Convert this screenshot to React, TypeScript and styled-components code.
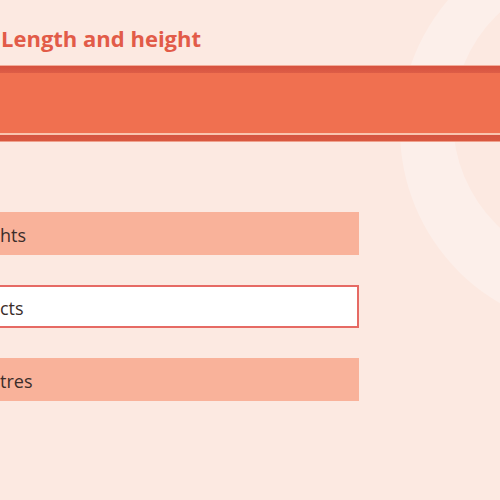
import styled, { createGlobalStyle } from 'styled-components';

const GlobalStyle = createGlobalStyle`
  html, body {
    margin: 0;
    padding: 0;
    background: #fce9e1;
    overflow: hidden;
  }
`;

interface OptionProps {
  $selected?: boolean;
}

const options = [
  { label: 'hts', selected: false },
  { label: 'cts', selected: true },
  { label: 'tres', selected: false },
];

function App() {
  return (
    <>
      <GlobalStyle />
      <Page>
        {/* background decoration, sits behind everything */}
        <Ring>
          <RingHole />
        </Ring>
        <Heading>Length and height</Heading>
        <Banner />
        <Options>
          {options.map((o) => (
            <Option key={o.label} $selected={o.selected}>
              {o.label}
            </Option>
          ))}
        </Options>
      </Page>
    </>
  );
}

export default App;

const Page = styled.div`
  position: relative;
  width: 500px;
  height: 500px;
  overflow: hidden;
  background: #fce9e1;
  font-family: 'Open Sans', 'Noto Sans', sans-serif;
`;

const Ring = styled.div`
  position: absolute;
  left: 400px;
  top: -70px;
  width: 400px;
  height: 400px;
  border-radius: 50%;
  background: #fcefea;
`;

const RingHole = styled.div`
  position: absolute;
  left: 53px;
  top: 43px;
  width: 294px;
  height: 294px;
  border-radius: 50%;
  background: #fce9e1;
`;

const Heading = styled.h1`
  position: relative;
  margin: 0;
  padding: 24px 0 0 1px;
  font-size: 22px;
  line-height: 28px;
  font-weight: 700;
  color: #e25b48;
`;

const Banner = styled.div`
  position: relative;
  margin-top: 13px;
  height: 77px;
  background: linear-gradient(
    to bottom,
    #f3ab98 0,
    #f3ab98 1px,
    #d6523f 1px,
    #dd5d47 8px,
    #f07050 8px,
    #f07050 68px,
    #f9c4ae 68px,
    #f9c4ae 70px,
    #d55441 70px,
    #d9583f 76px,
    #efa08c 76px
  );
`;

const Options = styled.div`
  position: relative;
  margin-top: 70px;
  width: 359px;
  display: flex;
  flex-direction: column;
  gap: 30px;
`;

const Option = styled.div<OptionProps>`
  box-sizing: border-box;
  height: 43px;
  display: flex;
  align-items: center;
  padding-top: 2px;
  font-size: 18px;
  color: #3b2d2a;
  background: ${({ $selected }) => ($selected ? '#ffffff' : '#f9b29a')};
  border: ${({ $selected }) => ($selected ? '2px solid #e66a64' : 'none')};
  border-left: none;
`;
